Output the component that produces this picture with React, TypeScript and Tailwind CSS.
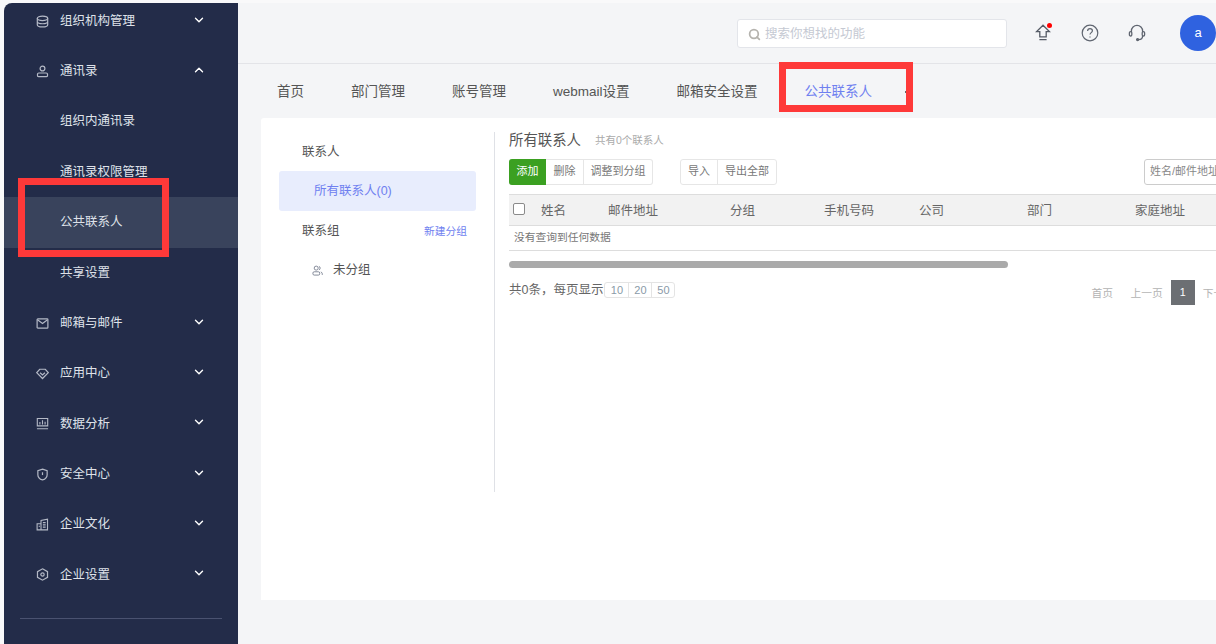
import { ChevronDown, ChevronUp, Search } from "lucide-react";
import type { ReactNode } from "react";

const ico = "w-[13px] h-[13px] shrink-0 text-[#b4b9c6]";

const icons: Record<string, ReactNode> = {
  org: (
    <svg viewBox="0 0 14 14" fill="none" stroke="currentColor" strokeWidth="1.3" className={ico}>
      <ellipse cx="7" cy="3.6" rx="5.6" ry="2.4" />
      <path d="M1.4 3.6v6.8c0 1.3 2.5 2.4 5.6 2.4s5.6-1.1 5.6-2.4V3.6M1.4 7c0 1.3 2.5 2.4 5.6 2.4s5.6-1.1 5.6-2.4" />
    </svg>
  ),
  user: (
    <svg viewBox="0 0 14 14" fill="none" stroke="currentColor" strokeWidth="1.3" className={ico}>
      <circle cx="7" cy="3.8" r="2.6" />
      <rect x="1.6" y="8.6" width="10.8" height="4" rx="1.4" />
    </svg>
  ),
  mail: (
    <svg viewBox="0 0 14 14" fill="none" stroke="currentColor" strokeWidth="1.3" className={ico}>
      <rect x="1.2" y="2" width="11.6" height="10" rx="0.8" />
      <path d="M1.6 3l5.4 4 5.4-4" />
    </svg>
  ),
  app: (
    <svg viewBox="0 0 14 14" fill="none" stroke="currentColor" strokeWidth="1.3" className={ico}>
      <path d="M4 2.4h6l3.2 3.6L7 12.4.8 6z" />
      <path d="M4.4 6.2L7 8.6l2.6-2.4" />
    </svg>
  ),
  data: (
    <svg viewBox="0 0 14 14" fill="none" stroke="currentColor" strokeWidth="1.2" className={ico}>
      <path d="M1.4 9.6V1.6h11.2v8zM1 12.6h12M4.2 8V5.4M7 8V3.6M9.8 8V5" />
    </svg>
  ),
  safe: (
    <svg viewBox="0 0 14 14" fill="none" stroke="currentColor" strokeWidth="1.3" className={ico}>
      <path d="M7 1.2l5 1.6v4.4c0 2.8-2.2 4.8-5 5.6-2.8-.8-5-2.8-5-5.6V2.8z" />
      <path d="M7 4.6v3" />
    </svg>
  ),
  culture: (
    <svg viewBox="0 0 14 14" fill="none" stroke="currentColor" strokeWidth="1.2" className={ico}>
      <path d="M5.4 12.8V2.6l7-1.4v11.6zM5.4 6.2H1.2v6.6h4.2M7.4 5h3M7.4 7.4h3M7.4 9.8h3M3 9h1" />
    </svg>
  ),
  setting: (
    <svg viewBox="0 0 14 14" fill="none" stroke="currentColor" strokeWidth="1.3" className={ico}>
      <path d="M7 .9l5.4 3v6.2L7 13.1l-5.4-3V3.9z" />
      <circle cx="7" cy="7" r="1.8" />
    </svg>
  ),
};

const menu = [
  { label: "组织机构管理", icon: "org" },
  { label: "通讯录", icon: "user", open: true },
  { label: "组织内通讯录", sub: true },
  { label: "通讯录权限管理", sub: true },
  { label: "公共联系人", sub: true, active: true },
  { label: "共享设置", sub: true },
  { label: "邮箱与邮件", icon: "mail" },
  { label: "应用中心", icon: "app" },
  { label: "数据分析", icon: "data" },
  { label: "安全中心", icon: "safe" },
  { label: "企业文化", icon: "culture" },
  { label: "企业设置", icon: "setting" },
];

const tabs = ["首页", "部门管理", "账号管理", "webmail设置", "邮箱安全设置", "公共联系人"];
const cols = [
  { label: "姓名", w: "w-[67px]" },
  { label: "邮件地址", w: "w-[122px]" },
  { label: "分组", w: "w-[94px]" },
  { label: "手机号码", w: "w-[95px]" },
  { label: "公司", w: "w-[108px]" },
  { label: "部门", w: "w-[108px]" },
  { label: "家庭地址", w: "w-[120px]" },
];

export default function App() {
  return (
    <div className="relative w-[1216px] h-[644px] overflow-hidden flex bg-[#f9f9fa] pt-[3px] pl-[4px] text-[#555] font-['Liberation_Sans','Noto_Sans_CJK_SC',sans-serif]">
      {/* sidebar */}
      <aside className="w-[234px] shrink-0 bg-[#232c49] rounded-tl-[8px] overflow-hidden">
        <div className="-mt-[7px]">
          {menu.map(m => (
            <div
              key={m.label}
              className={`h-[50.35px] flex items-center pr-[32px] text-[12.5px] text-[#dfe2e9] ${m.sub ? "pl-[56px]" : "pl-[32px]"} ${m.active ? "bg-[#39435c]" : ""}`}
            >
              {m.icon && <span className="w-[24px] flex">{icons[m.icon]}</span>}
              <span className="flex-1 whitespace-nowrap">{m.label}</span>
              {!m.sub && (m.open
                ? <ChevronUp className="w-[14px] h-[14px] -mt-[3px] text-white" strokeWidth={2.4} />
                : <ChevronDown className="w-[14px] h-[14px] -mt-[3px] text-white" strokeWidth={2.4} />)}
            </div>
          ))}
        </div>
        <div className="mx-[16px] mt-[18px] h-px bg-[#4a5270]" />
      </aside>

      {/* main */}
      <main className="flex-1 min-w-0 flex flex-col bg-[#f4f5f7]">
        <header className="h-[61px] shrink-0 flex items-center border-b border-[#e3e4e8] pl-[499px]">
          <div className="w-[270px] h-[29px] flex items-center gap-[4px] bg-white border border-[#e3e5ea] rounded-[3px] pl-[10px] pt-[2px] text-[12.5px] text-[#c5c9d3]">
            <Search className="w-[13px] h-[13px] text-[#b5b3ae]" strokeWidth={3.2} />
            搜索你想找的功能
          </div>
          <div className="relative ml-[28px] w-[16px]">
            <svg viewBox="0 0 16 18" fill="none" stroke="#555b66" strokeWidth="1.3" className="w-[16px] h-[18px]">
              <path d="M8 1.2L1.6 7.6h3.2v5.2h6.4V7.6h3.2zM4.4 15.6h7.2" />
            </svg>
            <span className="absolute -top-[1px] left-[12px] w-[5px] h-[5px] rounded-full bg-[#f00]" />
          </div>
          <svg viewBox="0 0 18 18" fill="none" stroke="#5f6570" strokeWidth="1.2" className="ml-[30px] w-[18px] h-[18px]">
            <circle cx="9" cy="9" r="7.8" />
            <path d="M6.6 7c0-1.4 1-2.4 2.4-2.4s2.4 1 2.4 2.2c0 1.8-2.4 1.9-2.4 3.8M9 12.4v1.2" />
          </svg>
          <svg viewBox="0 0 18 18" fill="none" stroke="#5f6570" strokeWidth="1.3" className="ml-[29px] w-[18px] h-[18px]">
            <path d="M3.4 8V7a5.6 5.6 0 0111.2 0v1M14.6 12c0 2-1.6 3.6-4 3.6" />
            <rect x="1.4" y="7.6" width="2.4" height="4.4" rx="1.2" />
            <rect x="14.2" y="7.6" width="2.4" height="4.4" rx="1.2" />
            <circle cx="9.6" cy="15.6" r="1" fill="#5f6570" />
          </svg>
          <div className="ml-[34px] w-[36px] h-[36px] shrink-0 rounded-full bg-[#2f62e0] text-white text-[13px] flex items-center justify-center">a</div>
        </header>

        <nav className="h-[54px] shrink-0 flex items-center gap-[47px] pl-[39px] pt-[3px] text-[13.5px] text-[#555]">
          {tabs.map((t, i) => (
            <span key={t} className={`whitespace-nowrap ${i === 5 ? "text-[#6f80f0]" : ""}`}>{t}</span>
          ))}
        </nav>

        <section className="ml-[23px] h-[482px] shrink-0 bg-white rounded-tl-[3px] flex pt-[14px] overflow-hidden">
          {/* contacts tree */}
          <div className="w-[234px] h-[360px] shrink-0 border-r border-[#dfe1e6] pl-[18px] pr-[18px] text-[12.5px] text-[#555]">
            <div className="h-[39px] pl-[23px] pt-[2px] flex items-center">联系人</div>
            <div className="h-[40px] pl-[35px] flex items-center bg-[#e8edfd] rounded-[3px] text-[#6f80f0]">所有联系人(0)</div>
            <div className="h-[39px] pl-[23px] pr-[9px] pt-[1px] flex items-center justify-between">
              <span>联系组</span>
              <span className="text-[10.75px] text-[#6f7ff0]">新建分组</span>
            </div>
            <div className="h-[40px] pl-[33px] flex items-center gap-[10px]">
              <svg viewBox="0 0 12 12" fill="none" stroke="#7a8090" strokeWidth="1" className="w-[11px] h-[11px]">
                <circle cx="4.6" cy="3.4" r="2.2" />
                <rect x="1" y="7.4" width="7.4" height="3.6" rx="1.4" />
                <path d="M7.6 1.4a2.2 2.2 0 010 4M9.6 7.6c1 .3 1.6 1 1.6 2v1.2" />
              </svg>
              未分组
            </div>
          </div>

          {/* contacts table */}
          <div className="flex-1 min-w-0 pl-[14px]">
            <div className="flex items-center h-[18px] gap-[14px]">
              <h2 className="text-[14.4px] font-normal text-[#555]">所有联系人</h2>
              <span className="text-[10.5px] text-[#aaa]">共有0个联系人</span>
            </div>
            <div className="flex mt-[9px] text-[11px] text-[#777]">
              <div className="flex h-[26px] items-center rounded-[3px] border border-[#e6e6e6] border-l-0">
                <span className="w-[37px] h-[26px] -my-px pb-[2px] flex items-center justify-center bg-[#3ba021] text-white rounded-l-[3px]">添加</span>
                <span className="w-[37px] pb-[1px] text-center">删除</span>
                <span className="w-[69px] h-full pb-[1px] flex items-center justify-center border-l border-[#e6e6e6]">调整到分组</span>
              </div>
              <div className="flex h-[26px] items-center rounded-[3px] border border-[#e6e6e6] ml-[27px]">
                <span className="w-[36px] pb-[1px] text-center">导入</span>
                <span className="w-[59px] h-full pb-[1px] flex items-center justify-center border-l border-[#e6e6e6]">导出全部</span>
              </div>
              <div className="h-[26px] w-[160px] shrink-0 ml-[367px] pb-[1px] flex items-center pl-[5px] rounded-[3px] border border-[#ccc] whitespace-nowrap text-[#888]">姓名/邮件地址</div>
            </div>
            <table className="table-fixed w-[746px] mt-[9px] border-collapse text-[12.5px] text-[#666]">
              <thead>
                <tr className="h-[31px] bg-[#f2f2f2] border-y border-[#ddd]">
                  <th className="w-[32px] pl-[4px] text-left">
                    <span className="block w-[12px] h-[12px] -mt-[3px] bg-white border border-[#8a8a8a] rounded-[2px]" />
                  </th>
                  {cols.map(c => (
                    <th key={c.label} className={`${c.w} text-left font-normal pt-[3px]`}>{c.label}</th>
                  ))}
                </tr>
              </thead>
              <tbody>
                <tr className="h-[25px] border-b border-[#ddd]">
                  <td colSpan={8} className="pl-[5px] pb-[2px] text-[10.75px] text-[#777]">没有查询到任何数据</td>
                </tr>
              </tbody>
            </table>
            <div className="w-[499px] h-[7px] mt-[10px] rounded-full bg-[#aaa]" />
            <div className="flex mt-[12px]">
              <div className="flex items-center h-[20px] text-[12.5px] text-[#666] whitespace-nowrap">
                共0条，每页显示
                <div className="flex h-[16px] ml-[1px] items-center rounded-[3px] border border-[#e4e4e4] text-[11px] text-[#8a9aa8]">
                  <span className="w-[23px] text-center">10</span>
                  <span className="w-[23px] text-center border-l border-[#e4e4e4]">20</span>
                  <span className="w-[23px] text-center border-l border-[#e4e4e4]">50</span>
                </div>
              </div>
              <div className="flex items-center ml-[416px] h-[25px] gap-[8px] text-[10.75px] text-[#b3b3b3] whitespace-nowrap">
                <span className="w-[22px] pt-[1px]">首页</span>
                <span className="ml-[9px] pt-[1px]">上一页</span>
                <span className="w-[24px] h-[25px] flex items-center justify-center bg-[#6c6f73] text-white">1</span>
                <span className="pt-[1px]">下一页</span>
              </div>
            </div>
          </div>
        </section>
      </main>

      {/* annotation boxes over the screenshot */}
      <div className="absolute left-[779px] top-[62px] w-[134px] h-[50px] border-[7px] border-[#fe3939]" />
      <div className="absolute left-[18px] top-[178px] w-[151px] h-[79px] border-[7px] border-[#fe3939]" />
      <span className="absolute left-[905px] top-[91px] w-px h-[2px] bg-[#666]" />
    </div>
  );
}
